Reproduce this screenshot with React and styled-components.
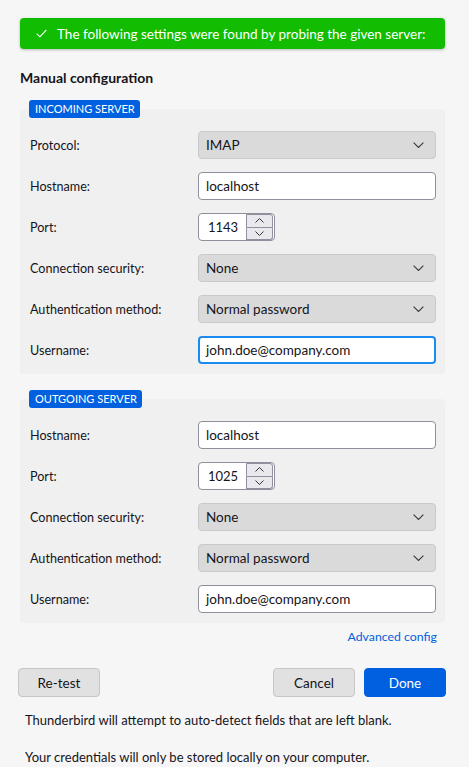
import React from "react";
import styled, { createGlobalStyle } from "styled-components";

const Global = createGlobalStyle`
  html, body { margin: 0; padding: 0; background: #f6f6f6; }
  body { font-family: Lato, "Noto Sans", sans-serif; color: #15141a; }
  * { box-sizing: border-box; }
`;

const Page = styled.div`
  width: 469px;
  min-height: 767px;
  background: #f6f6f6;
  display: flex;
  flex-direction: column;
  padding: 18px 0 0 0;
`;

const Banner = styled.div`
  margin: 0 24px 0 20px;
  height: 31px;
  background: #12bc00;
  border-radius: 4px;
  box-shadow: 0 1px 3px rgba(0, 0, 0, 0.25);
  display: flex;
  align-items: center;
  gap: 10px;
  padding-left: 16px;
  color: #fff;
  font-size: 13.5px;
  white-space: nowrap;
  svg { flex-shrink: 0; }
`;

const Heading = styled.h2`
  margin: 20px 0 0 20px;
  font-size: 14px;
  line-height: 18px;
  font-weight: 700;
`;

const Group = styled.div`
  margin: ${(p) => p.$top}px 24px 0 20px;
  display: flex;
  flex-direction: column;
  align-items: flex-start;
`;

const Badge = styled.span`
  position: relative;
  z-index: 1;
  margin-left: 9px;
  height: 18px;
  line-height: 18px;
  padding: 0 5px 0 6px;
  background: #0060df;
  color: #fff;
  border-radius: 3px;
  font-size: 11px;
  white-space: nowrap;
`;

const Panel = styled.div`
  align-self: stretch;
  margin-top: -9px;
  background: #f0f0f0;
  border-radius: 4px;
  padding: 22px 9px 10px 10px;
  display: flex;
  flex-direction: column;
  gap: 13px;
`;

const Row = styled.div`
  display: grid;
  grid-template-columns: 168px 1fr;
  align-items: center;
  height: 28px;
`;

const Label = styled.span`
  font-size: 12.6px;
`;

const SelectBox = styled.div`
  height: 28px;
  background: #dadada;
  border: 1px solid #c9c9c9;
  border-radius: 4px;
  display: flex;
  align-items: center;
  justify-content: space-between;
  padding: 0 11px 0 7px;
  font-size: 13.5px;
`;

const TextInput = styled.div`
  height: 28px;
  background: #fff;
  border: ${(p) => (p.$focus ? "2px solid #1a8cf0" : "1px solid #8f8f9d")};
  border-radius: 4px;
  display: flex;
  align-items: center;
  padding: 0 ${(p) => (p.$focus ? 6 : 7)}px;
  font-size: 13.5px;
`;

const Spin = styled.div`
  width: 77px;
  height: 28px;
  background: #fff;
  border: 1px solid #8f8f9d;
  border-radius: 4px;
  display: flex;
  align-items: center;
  justify-content: space-between;
  padding: 0 1px 0 9px;
  font-size: 13px;
`;

const SpinButtons = styled.div`
  width: 27px;
  height: 26px;
  display: flex;
  flex-direction: column;
`;

const SpinBtn = styled.div`
  flex: 1;
  background: #e9e9ed;
  border: 1px solid #8f8f9d;
  ${(p) => (p.$down ? "border-top: none; border-radius: 0 0 3px 0;" : "border-radius: 0 3px 0 0;")}
  display: flex;
  align-items: center;
  justify-content: center;
`;

const LinkRow = styled.div`
  margin: 6px 32px 0 0;
  display: flex;
  justify-content: flex-end;
`;

const Link = styled.a`
  color: #0060df;
  font-size: 12.3px;
  line-height: 16px;
  text-decoration: none;
`;

const ButtonRow = styled.div`
  margin: 23px 23px 0 18px;
  display: flex;
  gap: 9px;
`;

const Spacer = styled.div`
  flex: 1;
`;

const Button = styled.button`
  width: 82px;
  height: 29px;
  border-radius: 4px;
  font-family: inherit;
  font-size: 13.5px;
  border: 1px solid ${(p) => (p.$primary ? "#0060df" : "#c6c6c6")};
  background: ${(p) => (p.$primary ? "#0060df" : "#e1e1e1")};
  color: ${(p) => (p.$primary ? "#fff" : "#15141a")};
  padding: 0;
`;

const Note = styled.p`
  margin: ${(p) => p.$top}px 0 0 25px;
  font-size: 13px;
  line-height: 16px;
`;

const Chevron = ({ size = 11 }) => (
  <svg width={size} height={size * 0.6} viewBox="0 0 11 6.6" fill="none">
    <path d="M0.6 0.6 L5.5 5.5 L10.4 0.6" stroke="#3a3a3a" strokeWidth="1.1" />
  </svg>
);

const SmallChev = ({ up }) => (
  <svg width="9" height="5" viewBox="0 0 9 5" fill="none">
    <path d={up ? "M0.5 4.5 L4.5 0.5 L8.5 4.5" : "M0.5 0.5 L4.5 4.5 L8.5 0.5"} stroke="#333" strokeWidth="1" />
  </svg>
);

const Check = () => (
  <svg width="11" height="9" viewBox="0 0 11 9" fill="none">
    <path d="M0.7 4.6 L3.9 7.8 L10.3 1" stroke="#fff" strokeWidth="1.1" />
  </svg>
);

const Select = ({ value }) => (
  <SelectBox>
    <span>{value}</span>
    <Chevron />
  </SelectBox>
);

const Port = ({ value }) => (
  <Spin>
    <span>{value}</span>
    <SpinButtons>
      <SpinBtn><SmallChev up /></SpinBtn>
      <SpinBtn $down><SmallChev /></SpinBtn>
    </SpinButtons>
  </Spin>
);

const Field = ({ label, children }) => (
  <Row>
    <Label>{label}</Label>
    <div>{children}</div>
  </Row>
);

export default function App() {
  return (
    <Page>
      <Global />
      <Banner>
        <Check />
        <span>The following settings were found by probing the given server:</span>
      </Banner>
      <Heading>Manual configuration</Heading>

      <Group $top={13}>
        <Badge>INCOMING SERVER</Badge>
        <Panel>
          <Field label="Protocol:"><Select value="IMAP" /></Field>
          <Field label="Hostname:"><TextInput>localhost</TextInput></Field>
          <Field label="Port:"><Port value="1143" /></Field>
          <Field label="Connection security:"><Select value="None" /></Field>
          <Field label="Authentication method:"><Select value="Normal password" /></Field>
          <Field label="Username:"><TextInput $focus>john.doe@company.com</TextInput></Field>
        </Panel>
      </Group>

      <Group $top={16}>
        <Badge>OUTGOING SERVER</Badge>
        <Panel>
          <Field label="Hostname:"><TextInput>localhost</TextInput></Field>
          <Field label="Port:"><Port value="1025" /></Field>
          <Field label="Connection security:"><Select value="None" /></Field>
          <Field label="Authentication method:"><Select value="Normal password" /></Field>
          <Field label="Username:"><TextInput>john.doe@company.com</TextInput></Field>
        </Panel>
      </Group>

      <LinkRow>
        <Link href="#">Advanced config</Link>
      </LinkRow>

      <ButtonRow>
        <Button>Re-test</Button>
        <Spacer />
        <Button>Cancel</Button>
        <Button $primary>Done</Button>
      </ButtonRow>

      <Note $top={15}>Thunderbird will attempt to auto-detect fields that are left blank.</Note>
      <Note $top={21}>Your credentials will only be stored locally on your computer.</Note>
    </Page>
  );
}
